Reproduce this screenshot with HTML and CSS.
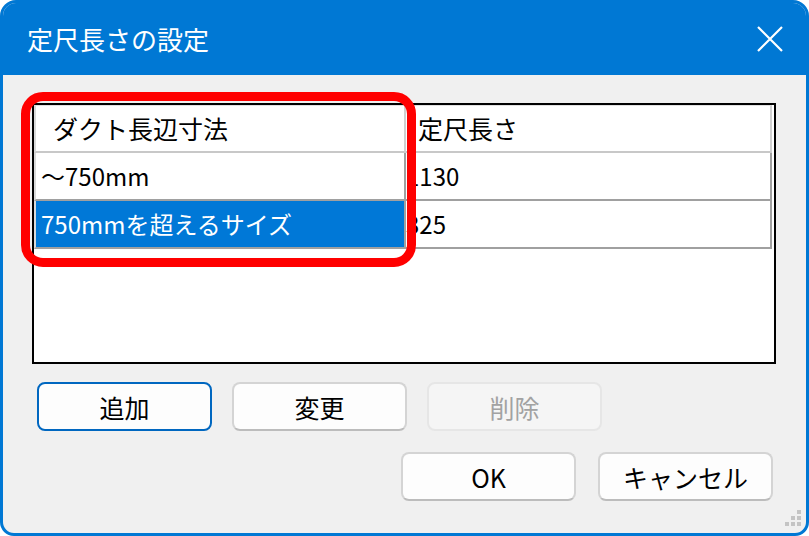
FILE: index.html
```html
<!DOCTYPE html>
<html lang="ja">
  <head>
    <meta charset="UTF-8" />
    <title>定尺長さの設定</title>
    <link rel="stylesheet" href="styles.css">
  </head>
  <body>
    <div class="window">
      <div class="titlebar">
        <span class="title">定尺長さの設定</span>
        <svg class="close" width="26" height="26" viewBox="0 0 26 26">
          <path d="M1 1 L25 25 M25 1 L1 25" stroke="#fff" stroke-width="2.2" fill="none" />
        </svg>
      </div>

      <div class="content">
        <div class="list">
          <div class="row head">
            <div class="cell c1">ダクト長辺寸法</div>
            <div class="cell c2">定尺長さ</div>
          </div>
          <div class="row">
            <div class="cell c1">〜750mm</div>
            <div class="cell c2"><span>1130</span></div>
          </div>
          <div class="row selected">
            <div class="cell c1">750mmを超えるサイズ</div>
            <div class="cell c2"><span>325</span></div>
          </div>
        </div>

        <div class="buttons">
          <button class="btn default">追加</button>
          <button class="btn">変更</button>
          <button class="btn" disabled>削除</button>
        </div>

        <div class="buttons actions">
          <button class="btn">OK</button>
          <button class="btn">キャンセル</button>
        </div>
      </div>

      <!-- annotation drawn over the list header -->
      <div class="mark"></div>

      <svg class="grip" width="20" height="20" viewBox="0 0 20 20">
        <rect x="14" y="2" width="4" height="4" fill="#c4c4c4" />
        <rect x="8" y="8" width="4" height="4" fill="#c4c4c4" />
        <rect x="14" y="8" width="4" height="4" fill="#c4c4c4" />
        <rect x="2" y="14" width="4" height="4" fill="#c4c4c4" />
        <rect x="8" y="14" width="4" height="4" fill="#c4c4c4" />
        <rect x="14" y="14" width="4" height="4" fill="#c4c4c4" />
      </svg>
    </div>
  </body>
</html>
```

FILE: styles.css
```css
* {
  margin: 0;
  box-sizing: border-box;
  font-family: "Noto Sans CJK JP", "Noto Sans", sans-serif;
}

body {
  background: #fff;
  width: 809px;
  height: 536px;
  overflow: hidden;
}

.window {
  position: relative;
  width: 809px;
  height: 536px;
  border: 3px solid #0078d4;
  border-radius: 16px 16px 14px 14px;
  background: #f0f0f0;
  overflow: hidden;
}

.titlebar {
  height: 72px;
  background: #0078d4;
  display: flex;
  align-items: center;
  padding: 0 23px 0 24px;
}

.title {
  color: #fff;
  font-size: 26px;
  line-height: 1;
}

.close {
  margin-left: auto;
}

.content {
  padding: 28px 30px 0 29px;
}

.list {
  height: 261px;
  border: 2px solid #000;
  background: #fff;
}

.row {
  display: flex;
  height: 48px;
}

.cell {
  height: 48px;
  display: flex;
  align-items: center;
  font-size: 24px;
  line-height: 1;
  color: #000;
  border-bottom: 2px solid #a0a0a0;
  border-right: 2px solid #a0a0a0;
  white-space: nowrap;
  overflow: hidden;
}

.c1 {
  width: 372px;
  padding-left: 5px;
  border-left: 2px solid #d8d8d8;
}

.c2 {
  width: 366px;
  padding-left: 4px;
}

.c2 span {
  margin-left: -4px;
}

.head .cell {
  font-size: 25px;
  border-bottom-color: #c8c8c8;
  border-right-color: #d0d0d0;
  border-top: 1px solid #e0e0e0;
}

.head .c1 {
  padding-left: 17px;
}

.head .c2 {
  padding-left: 12px;
}

.selected .c1 {
  background: #0078d7;
  color: #fff;
}

.buttons {
  display: flex;
  gap: 20px;
  margin-top: 18px;
  padding-left: 5px;
}

.actions {
  justify-content: flex-end;
  gap: 22px;
  margin-top: 21px;
  padding-right: 3px;
}

.btn {
  width: 175px;
  height: 49px;
  background: #fdfdfd;
  border: 2px solid #d4d4d4;
  border-bottom-color: #bcbcbc;
  border-radius: 8px;
  font-size: 25px;
  color: #000;
  padding: 0;
}

.btn.default {
  border: 2px solid #0067c0;
}

.btn:disabled {
  background: #f5f5f5;
  border-color: #e6e6e6;
  color: #a2a2a2;
}

.mark {
  position: absolute;
  left: 18px;
  top: 89px;
  width: 395px;
  height: 175px;
  border: 9px solid #ff0000;
  border-radius: 22px;
}

.grip {
  position: absolute;
  right: 3px;
  bottom: 5px;
}
```
